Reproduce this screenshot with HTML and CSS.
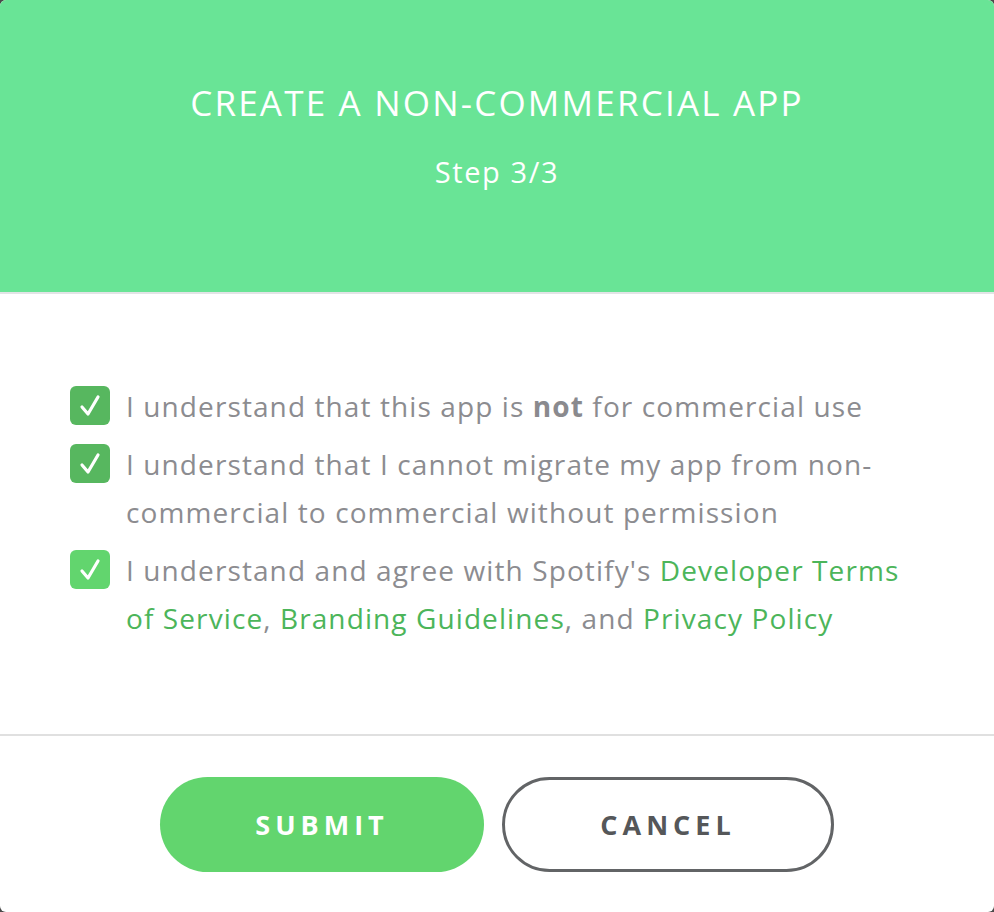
FILE: index.html
```html
<!DOCTYPE html>
<html>
<head>
<meta charset="utf-8">
<link rel="stylesheet" href="styles.css">
</head>
<body>
<div class="modal">
  <header class="head">
    <h1 class="title">CREATE A NON-COMMERCIAL APP</h1>
    <p class="step">Step 3/3</p>
  </header>
  <section class="content">
    <div class="row">
      <span class="box dark"><svg viewBox="0 0 40 40" width="40" height="40"><path d="M12 21 L18 28 L28 11" fill="none" stroke="#fff" stroke-width="3.2" stroke-linecap="round" stroke-linejoin="round"/></svg></span>
      <p class="txt">I understand that this app is <b>not</b> for commercial use</p>
    </div>
    <div class="row">
      <span class="box dark"><svg viewBox="0 0 40 40" width="40" height="40"><path d="M12 21 L18 28 L28 11" fill="none" stroke="#fff" stroke-width="3.2" stroke-linecap="round" stroke-linejoin="round"/></svg></span>
      <p class="txt">I understand that I cannot migrate my app from non-commercial to commercial without permission</p>
    </div>
    <div class="row">
      <span class="box light"><svg viewBox="0 0 40 40" width="40" height="40"><path d="M12 21 L18 28 L28 11" fill="none" stroke="#fff" stroke-width="3.2" stroke-linecap="round" stroke-linejoin="round"/></svg></span>
      <p class="txt">I understand and agree with Spotify's <a href="#">Developer Terms of Service</a>, <a href="#">Branding Guidelines</a>, and <a href="#">Privacy Policy</a></p>
    </div>
  </section>
  <footer class="foot">
    <button class="btn submit">SUBMIT</button>
    <button class="btn cancel">CANCEL</button>
  </footer>
</div>
</body>
</html>
```
FILE: styles.css
```css
html, body { margin: 0; padding: 0; }
body {
  background: #4a4a4a;
  font-family: "Open Sans", "Noto Sans", sans-serif;
}
.modal {
  width: 994px;
  height: 912px;
  background: #fff;
  border-radius: 6px;
  overflow: hidden;
  display: flex;
  flex-direction: column;
}
.head {
  height: 292px;
  background: #69e496;
  border-bottom: 2px solid #e2e4e6;
  display: flex;
  flex-direction: column;
  align-items: center;
  color: #fff;
}
.title {
  margin: 81px 0 0;
  font-size: 35px;
  font-weight: 400;
  line-height: 44px;
  letter-spacing: 2.2px;
}
.step {
  margin: 29px 0 0;
  font-size: 29px;
  font-weight: 400;
  line-height: 36px;
  letter-spacing: 1.6px;
}
.content {
  height: 442px;
  border-bottom: 2px solid #e0e0e0;
  padding: 92px 68px 0 70px;
  box-sizing: border-box;
  display: flex;
  flex-direction: column;
  gap: 14px;
}
.row {
  display: flex;
  align-items: flex-start;
  gap: 16px;
}
.box {
  flex: none;
  width: 40px;
  height: 39px;
  border-radius: 6px;
  display: flex;
  align-items: center;
  justify-content: center;
}
.box svg { display: block; }
.box.dark { background: #57b75f; }
.box.light { background: #62d56e; }
.txt {
  margin: -4px 0 0;
  font-size: 28px;
  font-weight: 400;
  line-height: 48px;
  letter-spacing: 1.1px;
  color: #8c8c90;
}
.txt b { font-weight: 700; color: #8a8a8e; }
.txt a { color: #4cb55a; text-decoration: none; }
.foot {
  flex: 1;
  display: flex;
  justify-content: center;
  align-items: flex-start;
  padding-top: 41px;
  gap: 18px;
}
.btn {
  height: 95px;
  border-radius: 48px;
  font-family: "Open Sans", "Noto Sans", sans-serif;
  font-size: 27px;
  font-weight: 700;
  letter-spacing: 5px;
  cursor: pointer;
}
.submit {
  width: 324px;
  background: #62d56e;
  color: #fff;
  border: none;
}
.cancel {
  width: 332px;
  background: #fff;
  color: #555759;
  border: 3px solid #626466;
}
```
